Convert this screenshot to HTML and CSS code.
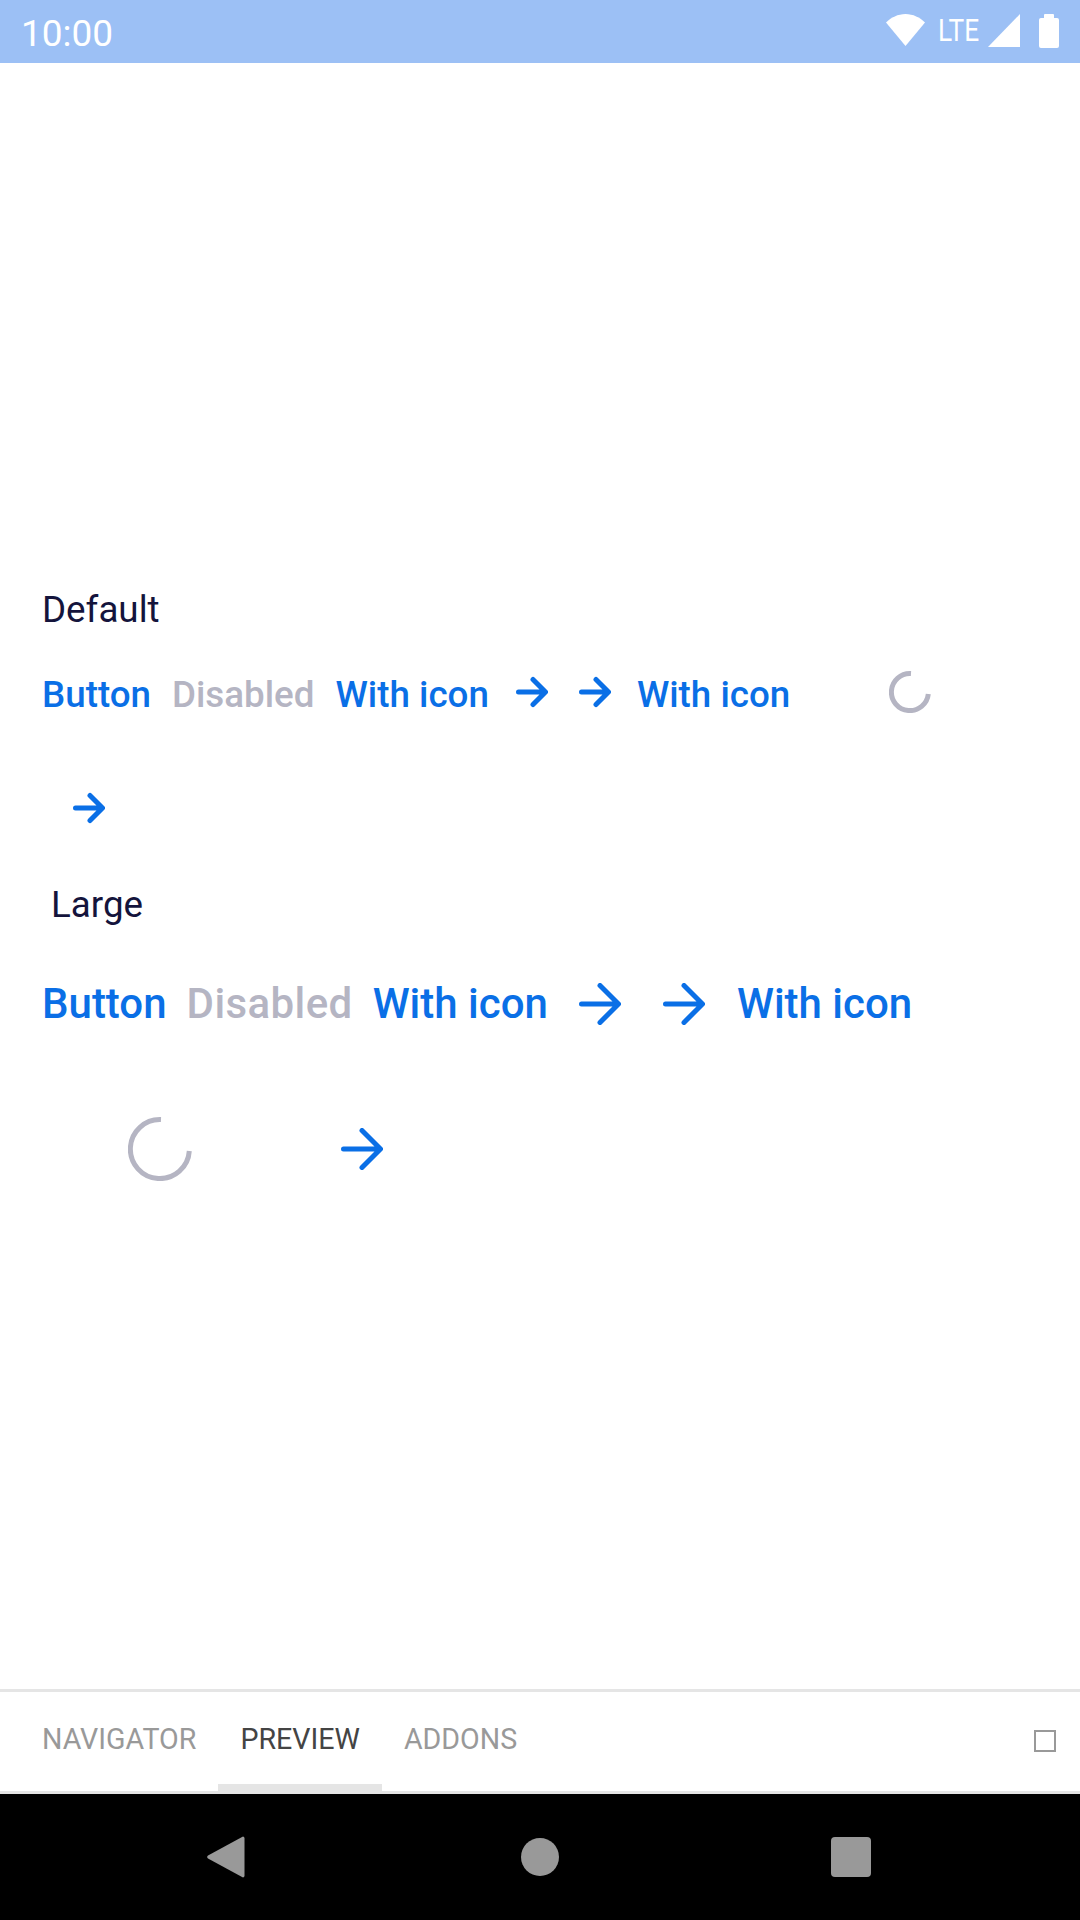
FILE: index.html
```html
<!DOCTYPE html>
<html lang="en">
<head>
<meta charset="utf-8">
<title>Button preview</title>
<link rel="stylesheet" href="styles.css">
</head>
<body>
<div class="screen">
  <header class="status">
    <span class="time">10:00</span>
    <div class="status-icons">
      <svg class="wifi" width="39" height="32" viewBox="0 0 39 32"><path d="M19.5 32 0 8.5C5 3.5 12 0 19.5 0S34 3.5 39 8.5Z"/></svg>
      <span class="lte">LTE</span>
      <svg class="signal" width="32" height="33" viewBox="0 0 32 33"><path d="M0 33 32 0V33Z"/></svg>
      <svg class="battery" width="20" height="34" viewBox="0 0 20 34"><path d="M5 4V1a1 1 0 0 1 1-1h8a1 1 0 0 1 1 1v3h3a2 2 0 0 1 2 2v26a2 2 0 0 1-2 2H2a2 2 0 0 1-2-2V6a2 2 0 0 1 2-2Z"/></svg>
    </div>
  </header>

  <main class="stories">
    <div class="label">Default</div>
    <div class="row row-default">
      <span class="btn">Button</span>
      <span class="btn off">Disabled</span>
      <span class="btn">With icon</span>
      <svg class="arrow" width="32" height="32" viewBox="0 0 32 32"><path d="M2.5 16H29M17 3.5 29.5 16 17 28.5"/></svg>
      <svg class="arrow gap-a" width="32" height="32" viewBox="0 0 32 32"><path d="M2.5 16H29M17 3.5 29.5 16 17 28.5"/></svg>
      <span class="btn gap-b">With icon</span>
      <svg class="spin gap-c" width="42" height="42" viewBox="0 0 42 42"><path d="M22 2.6A18.5 18.5 0 1 0 39.3 23"/></svg>
    </div>
    <div class="row row-default-2">
      <svg class="arrow" width="32" height="32" viewBox="0 0 32 32"><path d="M2.5 16H29M17 3.5 29.5 16 17 28.5"/></svg>
    </div>
    <div class="label label-large">Large</div>
    <div class="row row-large">
      <span class="btn lg">Button</span>
      <span class="btn lg off">Disabled</span>
      <span class="btn lg">With icon</span>
      <svg class="arrow lg-arrow" width="42" height="42" viewBox="0 0 42 42"><path d="M2.5 21H39M21 2.5 39.5 21 21 39.5"/></svg>
      <svg class="arrow lg-gap-a" width="42" height="42" viewBox="0 0 42 42"><path d="M2.5 21H39M21 2.5 39.5 21 21 39.5"/></svg>
      <span class="btn lg lg-gap-b">With icon</span>
    </div>
    <div class="row row-large-2">
      <svg class="spin" width="64" height="64" viewBox="0 0 64 64"><path d="M33 2.6A29.5 29.5 0 1 0 61.3 34"/></svg>
      <svg class="arrow lg-gap-c" width="42" height="42" viewBox="0 0 42 42"><path d="M2.5 21H39M21 2.5 39.5 21 21 39.5"/></svg>
    </div>
  </main>

  <nav class="tabs">
    <span class="tab">NAVIGATOR</span>
    <span class="tab active">PREVIEW</span>
    <span class="tab">ADDONS</span>
    <span class="tab-box"></span>
  </nav>

  <footer class="navbar">
    <svg width="38" height="42" viewBox="0 0 38 42"><path d="M36 0.5a2 2 0 0 1 1.5 1.5V40a2 2 0 0 1-1.5 1.5L1 22.5a2 2 0 0 1 0-3Z"/></svg>
    <span class="home"></span>
    <span class="recent"></span>
  </footer>
</div>
</body>
</html>
```
FILE: styles.css
```css
* { box-sizing: border-box; }
html, body { margin: 0; padding: 0; }
body { background: #fff; font-family: Roboto, "Liberation Sans", sans-serif; }
.screen { width: 1080px; height: 1920px; display: flex; flex-direction: column; overflow: hidden; }

.status { height: 63px; flex: none; background: #9cc0f5; color: #fff; display: flex; align-items: center; justify-content: space-between; padding: 0 21px 0 21px; }
.time { font-size: 37px; font-weight: 400; line-height: 63px; padding-top: 4px; }
.status-icons { display: flex; align-items: flex-start; padding-top: 14px; height: 63px; }
.status-icons svg { fill: #fff; display: block; }
.lte { font-size: 32px; font-weight: 400; line-height: 32px; width: 42px; margin: 0 8px 0 13px; transform: scaleX(.82); transform-origin: left top; white-space: nowrap; }
.battery { margin-left: 19px; }

.stories { flex: 1; padding: 0 0 0 42px; min-height: 0; }
.label { font-size: 36.75px; color: #14143c; line-height: 44px; margin-top: 525px; }
.row { display: flex; align-items: center; }
.btn { font-size: 36.75px; font-weight: 500; color: #0a6fe6; line-height: 44px; white-space: nowrap; margin-right: 21px; }
.btn.off { color: #b5b5c3; }
.btn.lg { font-size: 42px; line-height: 48px; margin-right: 20px; }
.btn.lg.off { letter-spacing: .4px; }
.arrow { display: block; fill: none; stroke: #0a6fe6; stroke-width: 5; stroke-linecap: round; stroke-linejoin: round; }
.spin { display: block; fill: none; stroke: #b5b5c3; stroke-width: 5; }
.row-default { margin-top: 41px; height: 44px; }
.row-default > .arrow, .row-default > .spin { margin-bottom: 6px; }
.row-default > .arrow:first-of-type { margin-left: 6px; }
.gap-a { margin-left: 31px; }
.gap-b { margin-left: 26px; }
.gap-c { margin-left: 78px; }
.row-default-2 { margin-top: 75px; padding-left: 31px; height: 32px; }
.label-large { margin: 59px 0 0 9px; }
.row-large { margin-top: 53px; height: 48px; }
.lg-arrow { margin-left: 11px; }
.lg-gap-a { margin-left: 42px; }
.lg-gap-b { margin-left: 32px; }
.row-large-2 { margin-top: 89px; padding-left: 86px; }
.lg-gap-c { margin-left: 149px; }

.tabs { height: 105px; flex: none; background: #fff; border-top: 3px solid #e5e5e5; border-bottom: 3px solid #e5e5e5; display: flex; padding-left: 20px; align-items: stretch; }
.tab { font-size: 28.6px; line-height: 95px; padding: 0 22px 0 22px; color: #999; }
.tab.active { color: #444; border-bottom: 7px solid #e5e5e5; }
.tab-box { width: 22px; height: 22px; border: 2px solid #999; margin: 38px 24px 0 auto; }

.navbar { height: 126px; flex: none; background: #000; display: flex; align-items: center; padding: 0 0 0 207px; }
.navbar svg { display: block; fill: #999; }
.home { width: 38px; height: 38px; border-radius: 50%; background: #999; margin-left: 276px; }
.recent { width: 40px; height: 40px; border-radius: 4px; background: #999; margin-left: 272px; }
```
